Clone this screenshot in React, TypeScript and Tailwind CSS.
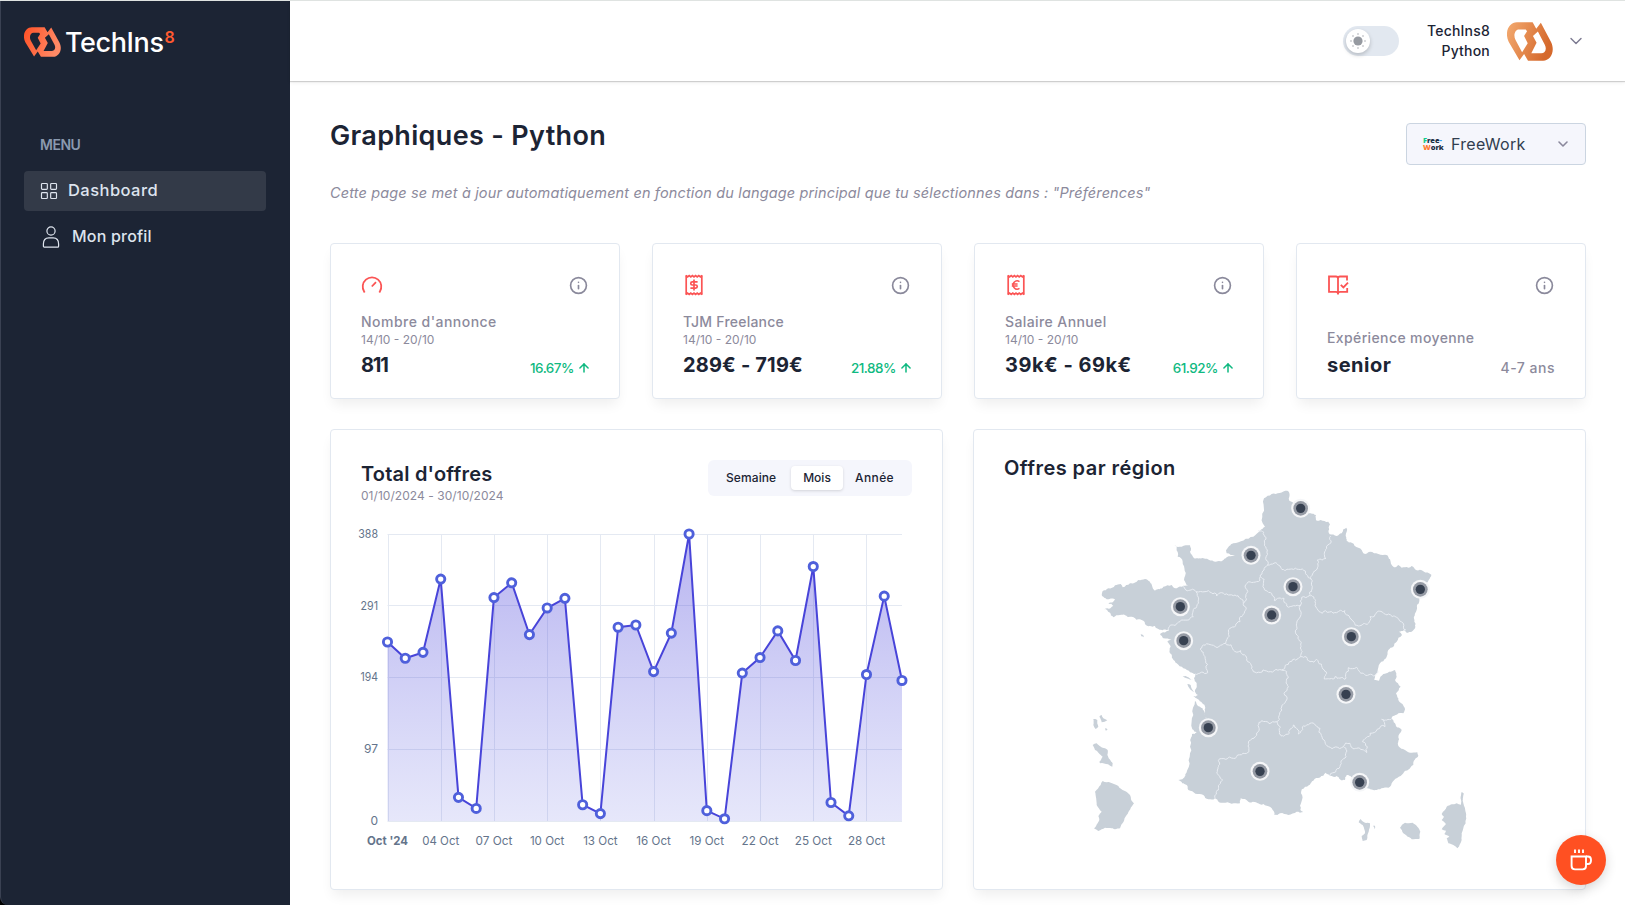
import React from "react";
import { ChevronDown, Info, ArrowUp, LayoutGrid } from "lucide-react";

type Pt = [number, number];

/* ---------- geometry helpers ---------- */

const parse = (s: string): Pt[] =>
  s
    .trim()
    .split(/\s+/)
    .map((p) => p.split(",").map(Number) as Pt);

// Subdivides each edge with a small deterministic offset so that coasts and borders look natural.
function roughen(pts: Pt[], amp: number): Pt[] {
  let seed = 7;
  const rnd = () => {
    seed = (seed * 16807) % 2147483647;
    return seed / 2147483647 - 0.5;
  };
  let cur = pts;
  for (let k = 0; k < 3; k++) {
    const next: Pt[] = [];
    for (let i = 0; i < cur.length - 1; i++) {
      const [x1, y1] = cur[i];
      const [x2, y2] = cur[i + 1];
      next.push(cur[i]);
      const len = Math.hypot(x2 - x1, y2 - y1);
      if (len > 7) {
        const o = rnd() * Math.min(len, 24) * amp;
        next.push([(x1 + x2) / 2 - ((y2 - y1) / len) * o, (y1 + y2) / 2 + ((x2 - x1) / len) * o]);
      }
    }
    next.push(cur[cur.length - 1]);
    cur = next;
  }
  return cur;
}

const toPath = (s: string, amp: number) =>
  "M" +
  roughen(parse(s), amp)
    .map(([x, y]) => `${x.toFixed(1)} ${y.toFixed(1)}`)
    .join("L");

/* ---------- map data ---------- */

const MAINLAND =
  "622,32 628,50 628,62 640,70 650,90 665,105 692,100 708,105 710,122 722,120 745,125 750,133 746,142 749,163 770,168 785,160 790,148 799,143 800,155 797,168 800,183 815,188 835,203 845,210 850,220 870,215 895,222 922,226 930,238 942,262 955,255 965,263 985,263 995,258 1008,270 1030,274 1054,284 1046,300 1040,310 1025,345 1018,355 1008,395 1003,425 1006,440 995,455 980,458 972,450 957,455 966,465 950,485 925,510 918,535 900,550 893,575 883,600 897,602 910,582 945,570 950,590 945,600 962,620 948,640 955,655 974,683 970,700 935,713 945,730 965,750 955,772 957,800 990,818 1012,817 1015,827 1000,855 970,880 935,910 930,920 890,930 862,925 850,910 815,892 800,885 795,900 780,898 770,888 750,887 737,878 700,902 675,920 663,940 661,990 670,996 650,995 625,1005 600,1000 583,1005 578,990 560,977 540,973 505,965 482,955 480,970 430,968 405,955 385,958 370,945 325,930 320,915 295,900 310,895 322,870 333,790 336,762 350,758 337,748 345,662 360,680 372,692 377,715 381,715 376,684 366,668 340,650 354,645 345,630 350,610 342,595 345,582 330,577 310,565 290,550 270,520 272,500 262,485 275,480 250,475 240,462 268,450 235,447 225,438 195,432 190,422 150,410 120,405 100,412 90,398 70,388 100,378 85,370 105,358 80,358 66,348 68,333 85,325 105,316 122,312 128,322 150,310 175,300 195,297 210,305 225,332 250,320 275,315 285,325 305,320 325,318 312,300 308,245 293,230 290,200 283,196 305,200 330,196 333,205 330,215 342,235 370,235 413,244 440,232 465,225 440,220 438,210 460,190 520,170 540,152 555,140 548,130 552,55 575,42 622,32";

const ISLANDS = [
  "40,717 52,720 55,740 47,747 40,735 40,717",
  "58,710 65,705 70,715 82,721 65,727 58,710",
  "75,745 83,748 78,753 75,745",
  "38,795 50,790 75,805 83,810 82,825 98,850 97,860 84,853 60,850 58,845 68,830 45,810 38,795",
  "68,903 115,918 133,932 150,945 153,958 162,970 140,1005 120,1045 105,1048 75,1043 55,1053 42,1045 58,1020 55,1008 65,995 50,975 45,935 62,915 68,903",
  "836,1027 842,1017 855,1028 870,1030 866,1055 860,1080 848,1083 845,1068 855,1060 848,1035 836,1027",
  "879,1037 885,1037 884,1048 879,1037",
  "960,1043 975,1028 998,1028 1012,1040 1021,1055 1018,1077 995,1078 970,1060 960,1043",
  "1144,937 1151,940 1150,970 1158,1000 1157,1030 1145,1060 1145,1080 1133,1105 1120,1095 1105,1090 1100,1075 1108,1070 1093,1062 1098,1052 1085,1048 1098,1032 1085,1020 1092,1010 1085,1002 1100,980 1115,973 1130,970 1143,974 1144,937",
  "182,463 190,466 192,472 184,469 182,463",
  "322,612 332,615 342,636 330,628 322,612",
  "308,588 325,592 340,600 320,595 308,588",
];

const BORDERS = [
  "535,152 558,172 562,210 557,235 563,255 552,270 541,285",
  "563,255 600,258 625,268 667,267 680,285 693,297",
  "752,168 740,205 738,235 712,240 708,270 693,297 697,320 688,347",
  "541,285 550,315 575,340 583,362 612,355 620,378 662,375 665,352 688,347",
  "541,290 530,305 495,318 500,340 490,370 465,345 445,345 425,338 410,348 375,335 348,335 318,330 308,318",
  "348,335 350,380 340,410 300,425 268,440 265,450",
  "490,370 493,400 480,425 450,445 437,490",
  "437,490 395,495 360,507 375,530 383,578 345,582",
  "437,490 460,510 482,512 500,540 520,575 560,573 605,570 630,545 662,530",
  "662,375 650,430 655,470 663,500 662,530",
  "688,347 705,365 727,400 770,398 795,392 810,415 835,438 865,430 870,410 895,393 925,402 950,412 970,430 978,450",
  "662,530 690,545 710,538 733,570 733,597 765,590 795,598 805,563 830,562 850,580 885,587 893,572",
  "605,570 625,590 625,620 612,640 620,660 605,690 590,725",
  "590,725 545,722 535,755 505,790 500,820 460,835 415,842 412,870 428,900 415,930 405,955",
  "590,725 598,762 625,763 640,735 655,762 670,738 690,730 720,745 735,785 745,800 790,800",
  "790,800 810,790 830,805 860,818 862,800 847,785 870,760 915,740 905,718 935,715",
  "790,800 798,830 780,860 750,887",
];

const PINS = parse(
  "662,85 513,226 301,380 311,482 639,320 575,405 814,470 1021,328 385,743 540,874 798,643 839,907"
);

/* ---------- chart data ---------- */

const VALUES = [
  242, 220, 228, 327, 32, 17, 302, 322, 252, 288, 301, 22, 10, 262, 265, 202, 254, 388, 14, 3, 200, 221, 257, 217,
  344, 25, 7, 198, 304, 190,
];
const X0 = 26.5;
const STEP = 17.74;
const Y0 = 301;
const YTOP = 14;
const px = (i: number) => X0 + i * STEP;
const py = (v: number) => Y0 - (v / 388) * (Y0 - YTOP);
const LINE = VALUES.map((v, i) => `${px(i).toFixed(1)} ${py(v).toFixed(1)}`).join("L");

function LogoMark({ id, from, to, className }: { id: string; from: string; to: string; className: string }) {
  return (
    <svg viewBox="20 21 140 115" className={className} preserveAspectRatio="none">
      <defs>
        <linearGradient id={id} x1="0" y1="0" x2="1" y2="0.3">
          <stop offset="0" stopColor={from} />
          <stop offset="1" stopColor={to} />
        </linearGradient>
      </defs>
      <path
        fill={`url(#${id})`}
        fillRule="evenodd"
        d="M58 134L25 79C11 50 27 22 50 22H98L109 41L123 23L154 80C168 108 152 135 130 135H84L72 115ZM66 110L46 74C38 59 45 43 56 43H77L81 48L72 62L83 84ZM114 49L99 62L110 82L94 113H124C136 113 142 101 135 88Z"
      />
    </svg>
  );
}

function Sidebar() {
  return (
    <aside className="flex w-[290px] shrink-0 flex-col rounded-bl-lg border-l border-[#3a4152] bg-[#1c2434] pl-[23px] pr-6">
      <div className="flex h-[53px] items-end pb-px pt-6">
        <LogoMark id="mark-dark" from="#ff5126" to="#ff8a66" className="mb-[-4px] h-[30px] w-[37px]" />
        <span className="mb-[-1px] ml-1 text-[27px] font-medium leading-[22px] tracking-[-0.4px] text-white">
          TechIns
        </span>
        <span className="mb-[9px] ml-px text-[16px] font-semibold leading-[14px] text-[#ff5a30]">8</span>
      </div>
      <nav className="mt-[80px]">
        <h3 className="pl-4 text-sm font-semibold leading-[22px] tracking-[-0.5px] text-[#8a99af]">MENU</h3>
        <ul className="mt-[15px] flex flex-col gap-[6px] font-medium text-[#dee4ee]">
          <li className="flex h-10 items-center rounded-sm bg-[#333a48] pl-[15px]">
            <LayoutGrid className="h-5 w-5" strokeWidth={1.4} />
            <span className="mb-[2px] ml-[9px] text-[16.5px] leading-6 tracking-[0.45px]">Dashboard</span>
          </li>
          <li className="flex h-10 items-center pl-[18px]">
            <svg viewBox="0 0 18 22" className="h-[22px] w-[18px]" fill="none" stroke="currentColor" strokeWidth="1.2">
              <circle cx="9" cy="5" r="4.1" />
              <path d="M1.4 18c0-4 2.4-6.2 5.4-6.2h4.4c3 0 5.4 2.200 5.4 6.200v2.200q0 .9-.9.9H2.300q-.9 0-.9-.9z" />
            </svg>
            <span className="mb-[2px] ml-3 text-base leading-6 tracking-[0.2px]">Mon profil</span>
          </li>
        </ul>
      </nav>
    </aside>
  );
}

function Header() {
  return (
    <header className="relative z-10 flex h-20 shrink-0 items-center justify-end bg-white pr-[39px] shadow-[0_1px_1px_rgba(0,0,0,0.16),0_2px_4px_rgba(0,0,0,0.05)]">
      <div className="flex h-[30px] w-14 items-center rounded-full bg-[#e2e8f0] pl-[3px]">
        <div className="flex h-6 w-6 items-center justify-center rounded-full bg-white shadow-[0_2px_4px_rgba(0,0,0,0.2)]">
          <svg viewBox="0 0 16 16" className="h-4 w-4" fill="#969aa1">
            <circle cx="8" cy="8" r="4.6" />
            <g>
              <circle cx="8" cy="1" r=".7" />
              <circle cx="8" cy="15" r=".7" />
              <circle cx="1" cy="8" r=".7" />
              <circle cx="15" cy="8" r=".7" />
              <circle cx="3" cy="3" r=".7" />
              <circle cx="13" cy="3" r=".7" />
              <circle cx="3" cy="13" r=".7" />
              <circle cx="13" cy="13" r=".7" />
            </g>
          </svg>
        </div>
      </div>
      <div className="ml-[28px] text-right text-sm font-medium leading-5 tracking-[0.2px] text-[#1c2434]">
        <div>TechIns8</div>
        <div>Python</div>
      </div>
      <LogoMark id="mark-light" from="#f3aa70" to="#d5692c" className="ml-[17px] h-[39px] w-[46px]" />
      <ChevronDown className="ml-[13px] h-5 w-5 text-[#7d7b92]" strokeWidth={1.7} />
    </header>
  );
}

function GaugeIcon() {
  return (
    <svg viewBox="0 0 22 22" className="h-[22px] w-[22px]" fill="none" stroke="#fb5454" strokeWidth="1.8">
      <path d="M3.200 17.700A9.300 9.300 0 1 1 18.800 17.700" strokeLinecap="square" />
      <path d="M10.800 12.500L15 8.100" />
    </svg>
  );
}

function ReceiptIcon({ children }: { children: React.ReactNode }) {
  return (
    <svg viewBox="0 0 22 22" className="h-[22px] w-[22px]" fill="none" stroke="#fb5454" strokeWidth="1.700">
      <path d="M3.200 1.200v19.600M18.800 1.200v19.600" />
      <path d="M3 1.500l1.600 1.300 1.600-1.300 1.600 1.300 1.600-1.300L11 2.800l1.600-1.300 1.600 1.300 1.600-1.300 1.600 1.300L19 1.500M3 20.500l1.600-1.300 1.600 1.300 1.600-1.300 1.600 1.300 1.600-1.300 1.600 1.300 1.600-1.300 1.600 1.300 1.600-1.300 1.600 1.300" />
      {children}
    </svg>
  );
}

const dollar = (
  <ReceiptIcon>
    <path d="M14.600 7.900H9.300a1.550 1.550 0 0 0 0 3.100h3.400a1.550 1.550 0 0 1 0 3.100H7.400M11 5.600v10.800" />
  </ReceiptIcon>
);
const euro = (
  <ReceiptIcon>
    <path d="M14.500 7.600a4.100 4.100 0 1 0 0 6.800M6.800 10h5.800M6.800 12h5.800" strokeWidth="1.500" />
  </ReceiptIcon>
);
const book = (
  <svg viewBox="0 0 22 22" className="h-[22px] w-[22px]" fill="none" stroke="#fb5454" strokeWidth="1.800">
    <path d="M11 20.500V4.500q0-2-2-2H2v15.300h7q2 0 2 2.200q0-2.200 2-2.200h7.200V14" />
    <path d="M11 4.500q0-2 2-2h7V6.500M13.800 10.800l2.600 2.600 4.600-4.800" />
  </svg>
);

interface Stat {
  icon: React.ReactNode;
  label: string;
  labelCls: string;
  dates?: string;
  value: string;
  valueCls: string;
  trend: string;
  up: boolean;
}

const STATS: Stat[] = [
  { icon: <GaugeIcon />, label: "Nombre d'annonce", labelCls: "tracking-[0.47px]", dates: "14/10 - 20/10", value: "811", valueCls: "tracking-[-1.2px]", trend: "16.67%", up: true },
  { icon: dollar, label: "TJM Freelance", labelCls: "tracking-[0.22px]", dates: "14/10 - 20/10", value: "289€ - 719€", valueCls: "tracking-[0.17px]", trend: "21.88%", up: true },
  { icon: euro, label: "Salaire Annuel", labelCls: "tracking-[0.4px]", dates: "14/10 - 20/10", value: "39k€ - 69k€", valueCls: "tracking-[0.5px]", trend: "61.92%", up: true },
  { icon: book, label: "Expérience moyenne", labelCls: "tracking-[0.38px]", value: "senior", valueCls: "tracking-[0.5px]", trend: "4-7 ans", up: false },
];

function StatCard({ s }: { s: Stat }) {
  return (
    <div className="flex h-[156px] flex-col justify-between rounded-sm border border-[#e2e8f0] bg-white px-[30px] pb-[19px] pt-[30px] shadow-[0_8px_13px_-3px_rgba(0,0,0,0.07)]">
      <div className="flex items-start justify-between">
        {s.icon}
        <Info className="mr-px mt-[2px] h-[19px] w-[19px] text-[#8a899b]" strokeWidth={2.1} />
      </div>
      <div className="flex items-end justify-between">
        <div>
          <div className={`text-sm font-medium leading-5 text-[#8c8a9c] ${s.labelCls}`}>{s.label}</div>
          {s.dates && <div className="text-xs leading-4 text-[#8c8a9c]">{s.dates}</div>}
          <div className={`mt-[3px] text-xl font-bold leading-7 text-[#1c2434] ${s.valueCls}`}>{s.value}</div>
        </div>
        <div
          className={
            s.up
              ? "mr-[-2px] flex items-center gap-[3px] text-[13.5px] font-medium leading-[22px] tracking-[-0.5px] text-[#10b981]"
              : "text-sm font-medium leading-[22px] tracking-[0.5px] text-[#8c8a9c]"
          }
        >
          {s.trend}
          {s.up && <ArrowUp className="h-[14px] w-[14px]" strokeWidth={2.6} />}
        </div>
      </div>
    </div>
  );
}

function OffersChart() {
  return (
    <section className="flex h-[461px] flex-col rounded-sm border border-[#e2e8f0] bg-white px-[30px] pt-[30px] shadow-[0_8px_13px_-3px_rgba(0,0,0,0.07)]">
      <div className="flex items-start justify-between">
        <div>
          <h2 className="text-xl font-semibold leading-7 tracking-[0.2px] text-[#1c2434]">Total d'offres</h2>
          <div className="text-xs leading-4 tracking-[0.05px] text-[#8c8a9c]">01/10/2024 - 30/10/2024</div>
        </div>
        <div className="flex h-9 w-[204px] items-center rounded-md bg-[#f5f6fc] pl-[18px] text-xs font-medium text-[#1c2434]">
          <span className="w-[53px] tracking-[0.1px]">Semaine</span>
          <span className="ml-3 flex h-6 w-[52px] items-center justify-center rounded bg-white shadow-[0_1px_3px_rgba(0,0,0,0.14)]">
            Mois
          </span>
          <span className="ml-3 tracking-[0.4px]">Année</span>
        </div>
      </div>
      <svg
        viewBox="0 0 551 330"
        className="mt-[16px] h-[330px] w-[551px] overflow-visible font-['Inter',sans-serif] text-xs"
      >
        <defs>
          <linearGradient id="area" x1="0" y1="0" x2="0" y2="1">
            <stop offset="0" stopColor="#4338d8" stopOpacity="0.38" />
            <stop offset="1" stopColor="#5a5fe0" stopOpacity="0.15" />
          </linearGradient>
        </defs>
        <g stroke="#e4e9f2">
          {[388, 291, 194, 97, 0].map((v) => (
            <path key={v} d={`M${X0} ${Math.floor(py(v)) + 0.5}H541`} />
          ))}
          {[0, 3, 6, 9, 12, 15, 18, 21, 24, 27].map((i) => (
            <path key={i} d={`M${Math.round(px(i)) + 0.5} ${YTOP}V${Y0}`} />
          ))}
        </g>
        <path d={`M${px(0)} ${Y0}L${LINE}L${px(29)} ${Y0}Z`} fill="url(#area)" />
        <path d={`M${LINE}`} fill="none" stroke="#4844d9" strokeWidth="2" />
        <g fill="#fff" stroke="#4f60db" strokeWidth="2.900">
          {VALUES.map((v, i) => (
            <circle key={i} cx={px(i)} cy={py(v)} r="4.100" />
          ))}
        </g>
        <g fill="#64748b" textAnchor="end">
          {[388, 291, 194, 97, 0].map((v) => (
            <text
              key={v}
              x="17"
              y={py(v) + 3.9}
              textLength={v > 291 ? 19.800 : v > 99 ? 17.500 : undefined}
              lengthAdjust="spacingAndGlyphs"
            >
              {v}
            </text>
          ))}
        </g>
        <g fill="#64748b" textAnchor="middle">
          <text x={px(0)} y="325" fontWeight="700" textLength="41" lengthAdjust="spacingAndGlyphs">
            Oct '24
          </text>
          {["04", "07", "10", "13", "16", "19", "22", "25", "28"].map((d, i) => (
            <text key={d} x={px(3 * (i + 1))} y="325" textLength={d[0] === "1" ? 34.500 : 37} lengthAdjust="spacingAndGlyphs">
              {d} Oct
            </text>
          ))}
        </g>
      </svg>
    </section>
  );
}

function RegionMap() {
  return (
    <section className="flex h-[461px] flex-col rounded-sm border border-[#e2e8f0] bg-white pl-[30px] pt-6 shadow-[0_8px_13px_-3px_rgba(0,0,0,0.07)]">
      <h2 className="text-xl font-semibold leading-7 tracking-[0.45px] text-[#1c2434]">Offres par région</h2>
      <svg viewBox="0 0 1200 1140" className="-mt-[2px] ml-[76px] h-[380px] w-[400px] shrink-0">
        <g fill="#c8d0d8">
          <path d={toPath(MAINLAND, 0.35)} />
          {ISLANDS.map((s, i) => (
            <path key={i} d={toPath(s, 0.2)} />
          ))}
        </g>
        <g fill="none" stroke="#e9edf3" strokeWidth="3" strokeLinejoin="round">
          {BORDERS.map((s, i) => (
            <path key={i} d={toPath(s, 0.6)} />
          ))}
        </g>
        {PINS.map(([x, y], i) => (
          <g key={i}>
            <circle cx={x} cy={y} r="28.500" fill="#f5f6f8" />
            <circle cx={x} cy={y} r="22" fill="#969ba5" />
            <circle cx={x} cy={y} r="14" fill="#374151" />
          </g>
        ))}
      </svg>
    </section>
  );
}

export default function App() {
  return (
    <div className="relative flex h-[905px] w-full overflow-hidden border-t border-[#dfe3e1] bg-black font-['Inter',sans-serif]">
      <Sidebar />
      <div className="flex min-w-0 flex-1 flex-col bg-white">
        <Header />
        <main className="flex flex-1 flex-col px-10 pr-[39px] pt-[42px]">
          <div className="flex h-[42px] items-start justify-between">
            <h1 className="text-[27px] font-semibold leading-[26px] tracking-[0.33px] text-[#1c2434]">
              Graphiques - Python
            </h1>
            <div className="flex h-[42px] w-[180px] items-center rounded border border-[#cbd5e1] bg-[#f5f6fc]">
              <div className="ml-4 flex w-5 flex-col font-['Open_Sans',sans-serif] text-[7.5px] font-extrabold leading-[7px] tracking-[-0.1px] text-[#1d2f45]">
                <span className="flex">
                  <span className="text-[#12c98b]">F</span>ree<span className="text-[#2f9be8]">-</span>
                </span>
                <span className="flex">
                  <span className="text-[#ff7a2f]">W</span>ork
                </span>
              </div>
              <span className="mb-px ml-2 text-base tracking-[0.3px] text-[#313d4f]">FreeWork</span>
              <ChevronDown className="ml-auto mr-[14px] h-4 w-4 text-[#8a889c]" strokeWidth={2.400} />
            </div>
          </div>
          <p className="mt-[16px] text-[14.5px] italic leading-6 tracking-[0.14px] text-[#8c8a9c]">
            Cette page se met à jour automatiquement en fonction du langage principal que tu sélectionnes dans :
            "Préférences"
          </p>
          <div className="mt-[38px] grid grid-cols-4 gap-8">
            {STATS.map((s) => (
              <StatCard key={s.label} s={s} />
            ))}
          </div>
          <div className="mt-[30px] grid grid-cols-2 gap-[30px]">
            <OffersChart />
            <RegionMap />
          </div>
        </main>
      </div>
      <button className="absolute bottom-5 right-[19px] flex h-[50px] w-[50px] items-center justify-center rounded-full bg-[#ff5022] shadow-[0_4px_12px_rgba(0,0,0,0.16)]">
        <svg viewBox="0 0 22 22" className="h-[22px] w-[22px]" fill="none" stroke="#fff" strokeWidth="1.900">
          <path d="M1.600 7.500h14.400v9.500q0 3.400-3.400 3.400H5q-3.400 0-3.400-3.400z" />
          <path d="M16 7.500h2q3 0 3 3.500v.5q0 3.500-3 3.500h-2M5 .5v3.600M9 .5v3.600M13 .5v3.600" />
        </svg>
      </button>
    </div>
  );
}
